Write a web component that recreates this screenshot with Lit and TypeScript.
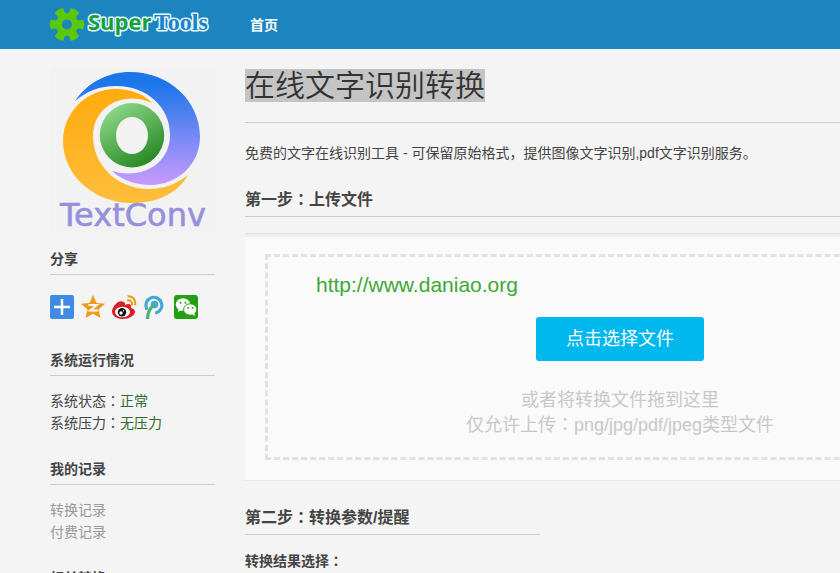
import { LitElement, html, css, svg } from "lit";
import { customElement } from "lit/decorators.js";

const brand = svg`
  <g fill="#5cc80c" transform="translate(17 17.500)">
    ${[30, 90, 150, 210, 270, 330].map(
      (a) => svg`<path d="M-6-7 L-4-12 L-5-16 Q0-18.500 5-16 L4-12 L6-7Z" transform="rotate(${a})" />`
    )}
    <path fill-rule="evenodd" d="M0-11A11 11 0 1 1 0 11A11 11 0 1 1 0-11ZM0-5A5 5 0 1 0 0 5A5 5 0 1 0 0-5Z" />
  </g>
  <g stroke="#e8fbff" stroke-width="3" paint-order="stroke" stroke-linejoin="round" font-weight="700">
    <text x="38" y="23" font-family="Open Sans, sans-serif" font-size="22" fill="#16a03c">Super</text>
    <text x="104" y="23" font-family="Liberation Serif, serif" font-size="24" fill="#1c83c4">Tools</text>
  </g>`;

@customElement("app-root")
export class AppRoot extends LitElement {
  static styles = css`
    :host {
      display: block;
      min-height: 100vh;
      overflow: hidden;
      background: #f4f4f4;
      color: #444;
      font: 14px/22px "Liberation Sans", "Noto Sans CJK SC", sans-serif;
    }
    * { box-sizing: border-box; }
    h1, h2, h3, p, ul { margin: 0; padding: 0; }
    ul { list-style: none; }
    a { color: inherit; text-decoration: none; }
    svg { display: block; overflow: visible; }
    .colon { font-family: "Noto Sans CJK JP", sans-serif; line-height: 1; }

    .topbar {
      display: flex;
      align-items: center;
      height: 49px;
      padding-left: 50px;
      gap: 36px;
      background: #1c85bf;
      color: #fff;
      font-weight: 700;
    }
    .layout {
      display: grid;
      grid-template-columns: 165px minmax(750px, 1fr);
      column-gap: 30px;
      min-width: 995px;
      max-width: 1170px;
      padding-left: 50px;
      padding-top: 18px;
    }
    .product { height: 166px; }
    .side h3 {
      height: 27px;
      margin-top: 15px;
      border-bottom: 1px solid #ccc;
      font-size: 14px;
      line-height: 22px;
    }
    .side .block { padding-bottom: 1px; }
    .share { display: flex; gap: 7px; padding: 20px 0 14px; }
    .lines { padding: 14px 0 8px; }
    .ok { color: #2f6b2f; }
    .muted { color: #999; }

    h1 {
      height: 56px;
      border-bottom: 1px solid #ccc;
      color: #333;
      font-size: 30px;
      line-height: 36px;
      font-weight: 350;
    }
    .marked { display: inline-block; height: 33px; margin-top: 2px; line-height: 33px; background: #c4c4c4; }
    .intro { padding-top: 19px; }
    h2 {
      height: 30px;
      border-bottom: 1px solid #ccc;
      font-size: 16px;
      line-height: 26px;
      font-weight: 700;
    }
    .first { margin-top: 23px; }
    .second { width: 295px; margin-top: 24px; }
    .panel {
      width: 750px;
      margin-top: 16px;
      padding: 20px;
      border-top: 1px solid #e2e2e2;
      border-bottom: 1px solid #e8e8e8;
      background: #fafafa;
      box-shadow: inset 0 3px 1px #eee;
    }
    .drop {
      position: relative;
      display: flex;
      flex-direction: column;
      align-items: center;
      height: 206px;
      padding-top: 60px;
      border: 3px dashed #e2e2e2;
      color: #c8c8c8;
      font-size: 18px;
      line-height: 25px;
    }
    .drop button {
      width: 168px;
      height: 44px;
      margin-bottom: 27px;
      padding: 0;
      border: 0;
      border-radius: 3px;
      background: #00b7ee;
      color: #fff;
      font: inherit;
    }
    .site {
      position: absolute;
      left: 48px;
      top: 15px;
      color: #3da836;
      font-size: 21px;
      line-height: 26px;
    }
    .option { padding-top: 15px; font-weight: 700; }
  `;

  private colon = html`<span class="colon">：</span>`;

  private icons() {
    return [
      ["更多", svg`<rect width="24" height="24" rx="2" fill="#3f8ae4"/><path d="M12 4v16M4 12h16" stroke="#fff" stroke-width="2.500"/>`],
      ["QQ空间", svg`<path d="M12 0l3.500 8 8.500.700-6.500 5.800 2 8.500L12 18.700 4.500 23l2-8.500L0 8.700 8.500 8Z" fill="#f09a1a"/><path d="M7.500 10H16L9 15.500h8" fill="none" stroke="#fff" stroke-width="1.800"/>`],
      ["新浪微博", svg`<path d="M10 6.500C6 5 0 12 0 16.500 0 21 5 24 10.500 24 17 24 23 20.500 23 17c0-2.500-2-3.500-4-4 .8-3.500-1.500-5-6-3 .5-2-.8-3.500-3-3.500Z" fill="#d61f26"/><ellipse cx="10.500" cy="17" rx="7.500" ry="5.200" fill="#fff"/><circle cx="10" cy="17.300" r="4.200" fill="#111"/><circle cx="9" cy="18" r="1.700" fill="#fff"/><circle cx="11.500" cy="15.800" r=".7" fill="#fff"/><path d="M15 5.500q5.500-1 5 5M15.500 1.300q8.300-.5 7.700 9" fill="none" stroke="#f09a1a" stroke-width="2"/>`],
      ["腾讯微博", svg`<path d="M3.500 13.500A8 8 0 1 1 13.500 17.800" fill="none" stroke="#3fa9d2" stroke-width="3.200" stroke-linecap="round"/><circle cx="11.500" cy="9.500" r="3.800" fill="#3fa9d2"/><path d="M10.500 10.500Q4.500 15 4.500 24" fill="none" stroke="#4cb277" stroke-width="3.400"/>`],
      ["微信", svg`<rect width="24" height="24" rx="3" fill="#22a012"/><path d="M4.500 14l-.5 3 3-1.700Z" fill="#fff"/><ellipse cx="9" cy="9.500" rx="7.200" ry="6.300" fill="#fff"/><ellipse cx="16.200" cy="14.500" rx="6.600" ry="5.700" fill="#fff" stroke="#22a012"/><path d="M18 19l2.800 2.200-.5-3.700Z" fill="#fff"/><g fill="#22a012"><circle cx="6.500" cy="7.700" r="1"/><circle cx="11.500" cy="7.700" r="1"/><circle cx="14" cy="13" r=".9"/><circle cx="18.500" cy="13" r=".9"/></g>`],
    ] as const;
  }

  render() {
    return html`
      <header class="topbar">
        <a href="#" aria-label="Super Tools">
          <svg width="164" height="36" viewBox="0 0 164 36">${brand}</svg>
        </a>
        <a href="#">首页</a>
      </header>
      <div class="layout">
        <aside class="side">
          <svg class="product" width="166" height="166" viewBox="0 0 166 166">
            <defs>
              <linearGradient id="b" x1="0" y1="0" x2="0" y2="1"><stop offset=".1" stop-color="#1b76ea"/><stop offset="1" stop-color="#c99aff"/></linearGradient>
              <linearGradient id="o" x1="0" y1="0" x2="0" y2="1"><stop stop-color="#ffab0c"/><stop offset="1" stop-color="#ffbd3c"/></linearGradient>
              <linearGradient id="g" x1="0" y1="0" x2=".6" y2="1"><stop stop-color="#9be396"/><stop offset="1" stop-color="#2a8a26"/></linearGradient>
            </defs>
            <rect width="166" height="166" fill="#f2f2f2"/>
            <path d="M25 34C38 15 58 5 80 5c39 0 70 29 70 65 0 27-22 48-50 48-14 0-28-5-38-14 30 9 58-7 58-36 0-28-23-49-54-49-16 0-29 5-41 15Z" fill="url(#b)"/>
            <path d="M102 36C94 27 80 22 66 22 36 22 13 46 13 74c0 35 32 62 68 62 27 0 47-10 57-28-12 9-24 14-39 14-32 0-56-24-56-53 0-30 31-46 59-33Z" fill="url(#o)"/>
            <path fill-rule="evenodd" d="M82 36a32 32 0 1 1 0 64.500A32 32 0 0 1 82 36ZM82 50c-9 0-16 8-16 18.500S73 87 82 87s16-8 16-18.500S91 50 82 50Z" fill="url(#g)"/>
            <text x="10" y="159" font-family="DejaVu Sans, sans-serif" font-size="32" fill="#9690dc" stroke="#9690dc" stroke-width=".6" stroke-linejoin="round">TextConv</text>
          </svg>
          <section class="block">
            <h3>分享</h3>
            <div class="share">
              ${this.icons().map(
                ([label, icon]) => html`<a href="#" aria-label=${label}><svg width="24" height="24" viewBox="0 0 24 24">${icon}</svg></a>`
              )}
            </div>
          </section>
          <section class="block">
            <h3>系统运行情况</h3>
            <div class="lines">
              <p>系统状态${this.colon}<span class="ok">正常</span></p>
              <p>系统压力${this.colon}<span class="ok">无压力</span></p>
            </div>
          </section>
          <section class="block">
            <h3>我的记录</h3>
            <ul class="lines muted">
              <li><a href="#">转换记录</a></li>
              <li><a href="#">付费记录</a></li>
            </ul>
          </section>
          <section class="block"><h3>相关转换</h3></section>
        </aside>
        <main>
          <h1><span class="marked">在线文字识别转换</span></h1>
          <p class="intro">免费的文字在线识别工具 - 可保留原始格式，提供图像文字识别,pdf文字识别服务。</p>
          <h2 class="first">第一步${this.colon}上传文件</h2>
          <section class="panel">
            <div class="drop">
              <a class="site" href="http://www.daniao.org">http://www.daniao.org</a>
              <button type="button">点击选择文件</button>
              <p>或者将转换文件拖到这里</p>
              <p>仅允许上传${this.colon}png/jpg/pdf/jpeg类型文件</p>
            </div>
          </section>
          <h2 class="second">第二步${this.colon}转换参数/提醒</h2>
          <p class="option">转换结果选择${this.colon}</p>
        </main>
      </div>
    `;
  }
}
